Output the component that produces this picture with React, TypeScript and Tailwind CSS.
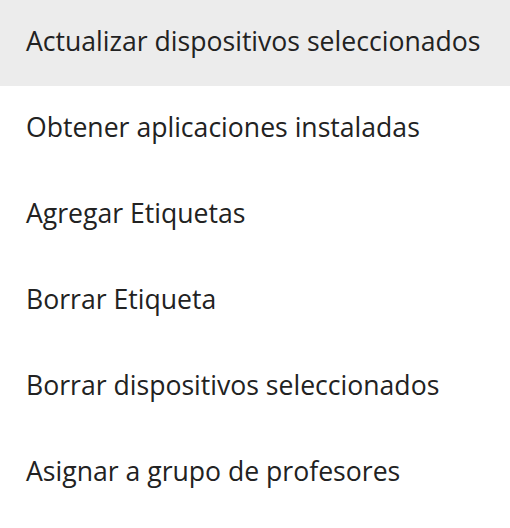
import React from "react";

const items = [
  "Actualizar dispositivos seleccionados",
  "Obtener aplicaciones instaladas",
  "Agregar Etiquetas",
  "Borrar Etiqueta",
  "Borrar dispositivos seleccionados",
  "Asignar a grupo de profesores",
];

export default function App() {
  return (
    <div className="w-[510px] h-[528px] bg-white flex flex-col" style={{ fontFamily: "'Open Sans', 'Noto Sans', sans-serif" }}>
      {items.map((t, i) => (
        <div
          key={t}
          className={`h-[86px] shrink-0 flex items-center pl-[26px] pb-[3px] text-[26.6px] text-[#222222] [font-variant-ligatures:none] ${i === 0 ? "bg-[#ececec]" : ""}`}
        >
          {t}
        </div>
      ))}
    </div>
  );
}
